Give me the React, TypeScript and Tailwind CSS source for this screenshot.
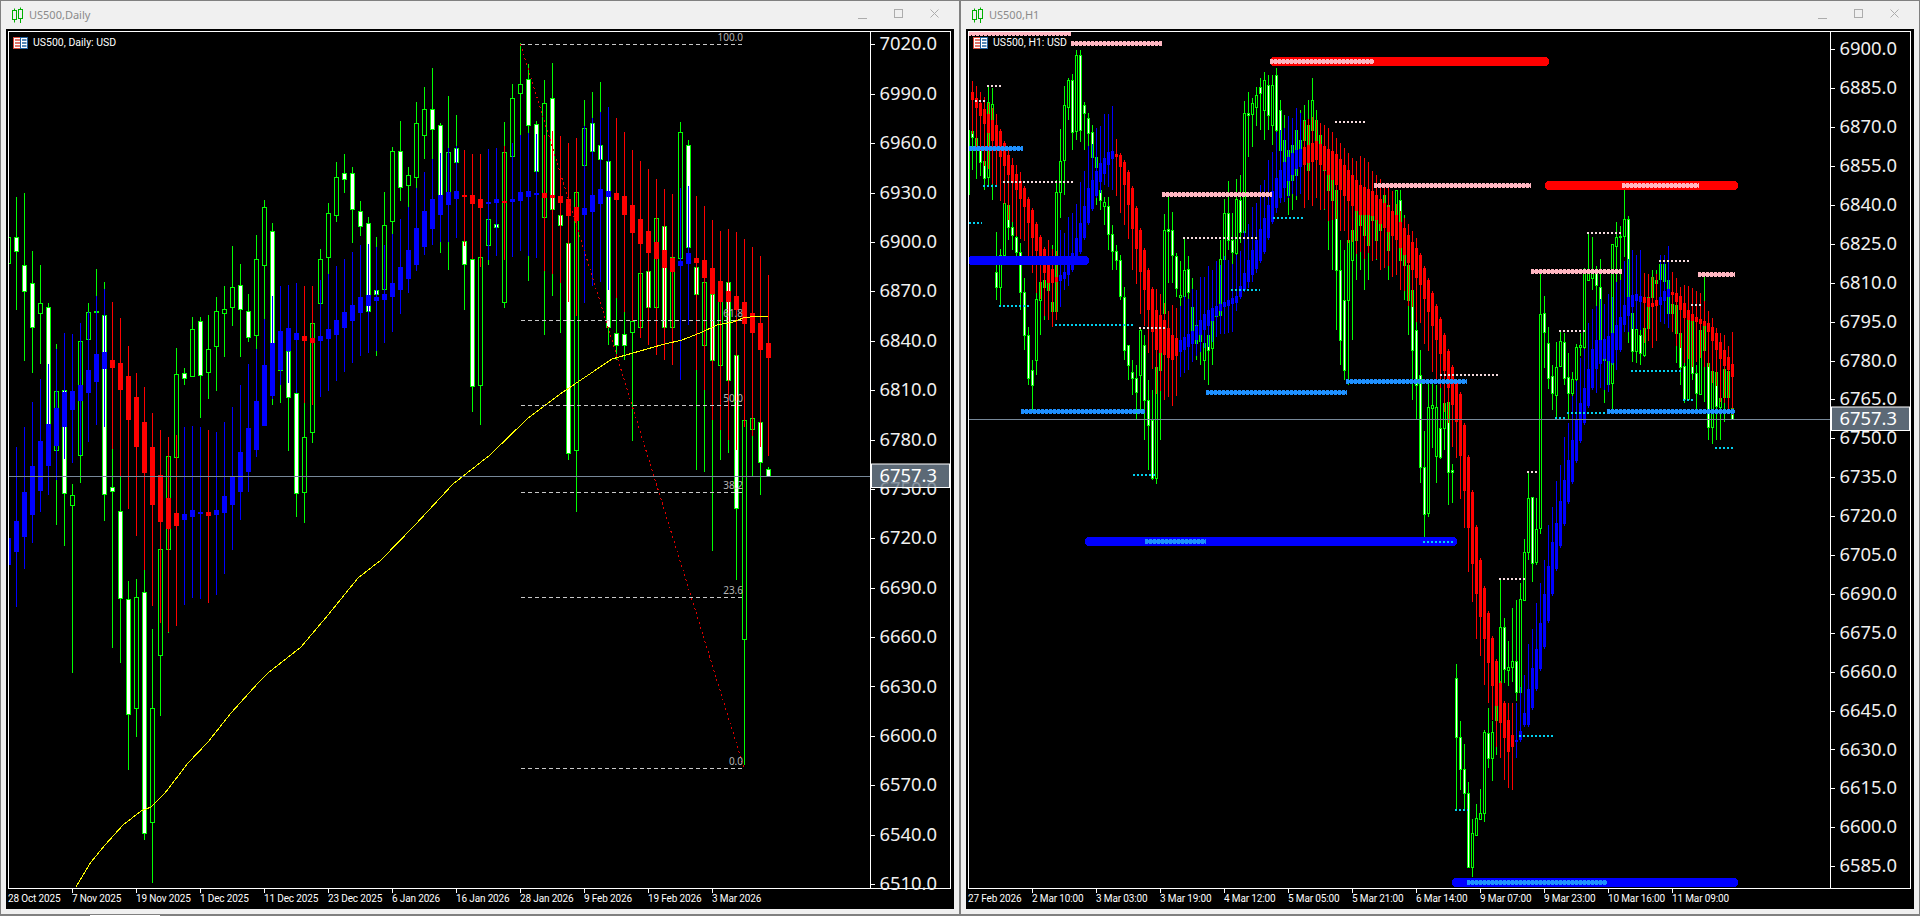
const GREEN = '#00ff00'

// [high, bodyTop, bodyBottom, low, filled], first bar sits at x=8, 8px apart
const dailyBars: number[][] = [
  [230,237,263,280,0],[197,237,251,310,1],[193,265,291,361,1],[251,283,327,373,1],[265,303,313,364,0],[303,307,427,435,1],
  [344,391,450,525,0],[388,390,493,546,1],[484,495,505,673,0],[341,341,455,483,0],[303,312,339,442,0],[269,311,312,400,0],
  [282,315,494,521,1],[449,487,491,648,1],[477,511,598,663,1],[581,599,714,770,1],[579,597,708,737,0],[569,592,833,840,1],
  [629,708,822,883,0],[549,549,655,716,0],[456,456,549,633,0],[348,374,457,460,0],[368,373,378,385,1],[317,329,376,377,0],
  [317,321,375,418,1],[315,349,372,399,0],[297,311,346,391,0],[286,309,313,357,0],[246,287,307,326,0],[264,285,309,357,1],
  [294,311,337,342,1],[235,259,335,349,0],[200,207,265,320,0],[223,231,343,405,1],[340,350,370,403,0],[343,351,397,451,1],
  [393,393,493,517,1],[403,437,492,523,0],[323,323,432,443,0],[249,259,303,310,0],[203,213,257,274,0],[162,177,215,222,0],
  [154,173,179,193,1],[167,173,209,243,1],[201,211,226,236,1],[217,223,311,312,1],[237,290,294,356,1],[192,225,289,295,0],
  [147,151,221,234,0],[121,151,187,201,1],[167,175,185,207,0],[102,123,177,189,0],[87,109,135,159,0],[68,109,129,159,1],
  [123,125,195,253,1],[96,152,192,270,0],[115,148,162,170,1],[241,241,264,310,1],[259,259,386,412,1],[257,257,385,425,0],
  [219,219,245,265,0],[224,224,227,228,1],[122,152,302,308,0],[84,98,156,158,0],[43,84,93,135,0],[64,79,125,281,1],
  [121,124,171,172,1],[80,103,217,335,0],[63,98,209,296,1],[215,215,225,333,1],[243,243,453,460,1],[192,192,450,512,0],
  [100,128,165,250,0],[92,123,151,200,1],[82,145,159,165,1],[161,161,327,345,1],[298,333,345,360,1],[312,334,345,360,1],
  [321,321,332,441,0],[273,273,327,338,0],[271,271,307,340,1],[218,218,307,320,0],[226,226,327,335,1],[257,257,327,340,0],
  [122,132,258,262,0],[140,145,247,255,1],[267,267,294,470,1],[282,282,345,472,0],[294,294,360,551,1],[300,300,365,460,0],
  [282,282,380,453,1],[340,355,508,580,1],[420,420,639,765,0],[418,418,429,476,0],[422,422,462,495,1],[467,469,476,476,1],
]

// smoothed overlay, same grid: [high, bodyTop, bodyBottom, low, 1 = blue / 0 = red]
const dailySmooth: number[][] = [
  [450,538,565,600,1],[447,521,552,607,1],[427,492,537,569,1],[402,466,515,543,1],[379,441,491,512,1],[364,424,466,495,1],
  [349,408,446,480,1],[333,392,427,459,1],[334,391,410,463,1],[323,385,401,455,1],[312,370,393,442,1],[296,354,382,425,1],
  [289,352,369,427,1],[302,360,368,449,0],[318,363,390,477,0],[346,376,420,509,0],[373,397,447,536,0],[387,422,473,570,0],
  [413,447,505,606,0],[430,475,522,623,0],[437,498,529,632,0],[435,513,526,626,0],[427,514,520,605,1],[426,510,517,598,1],
  [427,512,514,599,1],[430,512,516,603,0],[432,510,515,595,1],[422,496,513,574,1],[407,477,505,550,1],[385,452,492,520,1],
  [364,428,472,492,1],[349,401,450,457,1],[319,365,426,426,1],[296,343,396,399,1],[286,331,370,385,1],[285,328,351,383,1],
  [283,333,340,393,1],[286,336,341,403,0],[286,338,343,405,0],[280,336,341,397,1],[274,329,339,391,1],[266,320,335,381,1],
  [259,312,328,372,1],[252,305,321,363,1],[245,297,313,356,1],[244,295,306,353,1],[247,297,301,351,1],[245,294,300,343,1],
  [234,283,297,332,1],[219,267,290,314,1],[207,250,279,293,1],[188,228,265,271,1],[172,211,247,255,1],[159,199,229,245,1],
  [153,195,215,242,1],[148,192,205,242,1],[146,191,199,238,1],[150,195,196,246,0],[154,195,204,259,0],[154,199,208,267,0],
  [149,202,204,260,1],[148,199,203,256,1],[146,201,202,260,0],[143,199,202,257,1],[135,192,201,251,1],[133,191,197,256,1],
  [134,193,194,258,1],[135,193,198,271,0],[131,195,198,274,0],[136,196,203,283,0],[143,199,216,302,0],[138,207,221,316,0],
  [126,208,215,303,1],[118,195,212,286,1],[112,189,204,282,1],[107,191,197,290,1],[118,193,200,298,0],[132,196,215,312,0],
  [150,205,233,321,0],[161,219,244,338,0],[169,231,253,345,0],[179,242,259,355,0],[189,250,268,360,0],[194,258,272,365,0],
  [188,261,266,380,1],[186,253,264,325,1],[196,258,263,370,0],[206,260,278,390,0],[220,268,294,420,0],[231,281,302,430,0],
  [229,291,302,440,0],[232,296,310,450,0],[239,302,324,427,0],[247,313,333,436,0],[256,323,350,447,0],[275,343,358,456,0],
]

const dailyMa = '76,887 91,862 105,845 123,825 141,811 151,807 165,793 188,763 208,742 231,713 258,683 268,673 301,647 328,615 358,578 381,560 415,525 453,484 490,455 527,419 563,392 612,359 661,345 682,340 700,333 717,325 733,322 743,318 750,317 768,316'

// [x, bodyTop, bodyBottom, filled, high, low]
const hourBars: number[][] = [
  [972,131,137,1,121,170],[976,138,148,1,128,179],[980,150,162,1,143,176],[984,161,178,1,148,190],[988,102,177,0,86,186],[992,104,130,0,88,200],
  [996,272,287,1,232,300],[1000,255,287,0,249,306],[1004,203,255,0,198,262],[1008,205,227,1,196,240],[1012,227,235,1,210,250],[1016,237,252,1,217,263],
  [1020,252,292,1,243,310],[1024,292,335,1,278,350],[1028,335,378,1,327,385],[1032,370,385,1,360,413],[1036,299,360,0,285,375],[1040,282,300,0,265,335],
  [1044,280,287,0,265,320],[1048,282,290,1,260,318],[1052,302,311,0,245,320],[1056,192,311,0,180,320],[1060,161,192,0,129,218],[1064,105,160,0,86,195],
  [1068,80,107,0,78,120],[1072,80,132,1,74,150],[1076,55,131,0,50,140],[1080,55,130,1,50,142],[1084,105,113,1,102,150],[1088,118,133,1,113,150],
  [1092,132,157,1,125,190],[1096,157,167,0,145,205],[1100,190,200,1,190,210],[1104,202,206,0,197,225],[1108,206,234,1,197,250],[1112,234,251,1,225,270],
  [1116,251,260,1,245,270],[1120,260,296,1,255,300],[1124,297,350,1,287,360],[1128,345,365,1,347,380],[1132,372,378,1,360,395],[1136,378,392,1,365,420],
  [1140,330,375,0,328,410],[1144,345,400,1,335,440],[1148,400,425,1,380,470],[1152,420,478,1,390,480],[1156,367,478,0,350,484],[1160,345,370,0,335,440],
  [1164,230,313,0,214,365],[1168,229,231,1,197,283],[1172,230,255,1,212,283],[1176,256,288,1,253,297],[1180,295,297,0,261,327],[1184,270,296,0,238,317],
  [1188,269,292,1,256,305],[1192,307,343,1,278,355],[1196,325,343,1,310,360],[1200,324,341,0,310,365],[1204,343,360,0,320,380],[1208,335,350,1,320,385],
  [1212,318,348,0,300,365],[1216,312,316,0,285,325],[1220,259,315,0,240,325],[1224,213,259,0,199,262],[1228,213,240,1,181,250],[1232,240,252,1,213,265],
  [1236,199,253,0,179,255],[1240,200,232,1,175,243],[1244,113,232,0,101,235],[1248,113,115,1,92,157],[1252,103,114,0,98,147],[1256,95,107,0,87,126],
  [1260,87,93,1,78,130],[1264,80,110,0,72,140],[1268,85,115,1,75,130],[1272,85,125,0,75,145],[1276,75,130,1,68,150],[1280,110,150,1,100,175],
  [1284,140,170,0,115,195],[1288,150,195,1,130,215],[1292,145,180,0,130,210],[1296,130,175,1,120,200],[1300,140,160,0,110,175],[1304,120,140,0,105,160],
  [1308,125,170,1,100,185],[1312,100,130,0,78,150],[1316,120,150,1,110,170],[1320,135,160,1,125,190],[1324,150,170,1,130,210],[1328,160,190,1,140,250],
  [1332,165,200,0,140,270],[1336,190,270,1,170,330],[1340,270,340,1,240,365],[1344,300,370,1,250,380],[1348,240,300,0,190,385],[1352,230,260,0,200,340],
  [1356,205,240,0,190,280],[1360,200,225,1,190,270],[1364,205,235,1,195,290],[1368,215,245,0,200,280],[1372,195,220,0,185,240],[1376,200,240,1,195,260],
  [1380,200,230,0,190,260],[1384,195,215,0,190,250],[1388,205,250,1,195,280],[1392,215,235,0,195,270],[1396,190,230,0,190,250],[1400,200,260,1,190,270],
  [1404,235,265,1,215,300],[1408,265,300,1,250,335],[1412,290,350,1,280,400],[1416,330,385,1,300,420],[1420,375,467,1,350,483],[1424,467,514,1,431,537],
  [1428,407,513,0,382,517],[1432,405,408,0,380,448],[1436,407,456,0,385,483],[1440,428,457,1,382,459],[1444,403,428,0,383,450],[1448,402,472,1,385,505],
  [1452,470,472,1,464,503],[1456,678,737,1,664,810],[1460,737,769,1,721,790],[1464,769,793,1,744,810],[1468,793,867,1,782,868],[1472,833,867,0,819,877],
  [1476,818,835,0,804,836],[1480,813,819,0,789,820],[1484,732,813,0,730,822],[1488,733,758,1,708,768],[1492,732,758,0,721,781],[1496,705,720,0,706,755],
  [1500,627,683,0,579,723],[1504,627,669,1,618,683],[1508,667,670,0,641,686],[1512,661,667,0,608,682],[1516,661,692,1,600,701],[1520,599,692,0,583,692],
  [1524,552,600,0,539,600],[1528,498,552,0,472,560],[1532,497,563,1,497,582],[1536,529,562,0,498,565],[1540,314,528,0,273,534],[1544,313,332,1,296,368],
  [1548,343,378,1,327,389],[1552,376,393,1,365,410],[1556,367,395,0,342,418],[1560,341,366,0,332,367],[1564,342,378,1,333,385],[1568,377,393,1,353,420],
  [1572,379,393,0,372,399],[1576,347,379,0,344,425],[1580,345,347,0,333,356],[1584,273,347,0,268,357],[1588,273,280,0,233,281],[1592,273,278,0,237,290],
  [1596,270,285,1,266,340],[1600,287,347,1,259,375],[1604,340,360,0,340,403],[1608,360,384,1,305,392],[1612,244,383,0,244,410],[1616,237,246,0,222,282],
  [1620,236,237,0,226,282],[1624,219,236,0,190,257],[1628,219,297,1,216,343],[1632,313,351,1,296,362],[1636,329,351,0,315,363],[1640,335,353,1,320,365],
  [1644,328,355,0,300,357],[1648,297,328,0,297,330],[1652,277,297,0,270,300],[1656,280,283,1,270,310],[1660,264,279,0,262,280],[1664,264,281,0,262,300],
  [1668,280,313,0,270,322],[1672,304,313,0,304,325],[1676,305,333,1,305,363],[1680,333,367,1,333,385],[1684,366,399,1,363,403],[1688,320,399,0,320,400],
  [1692,321,373,1,320,380],[1696,373,393,1,365,410],[1700,330,394,0,330,395],[1704,325,350,0,277,402],[1708,363,427,1,328,440],[1712,371,427,0,368,444],
  [1716,372,406,1,372,440],[1720,398,407,0,368,440],[1724,369,397,0,369,422],[1728,371,397,0,371,410],[1732,408,419,1,405,420],
]

// body outline of the smoothed overlay on the hourly chart: [x, top, bottom]
const hourSmoothKeys: number[][] = [
  [968,85,95],[972,92,100],[1000,131,157],[1008,155,175],[1016,174,190],[1024,188,207],[1032,210,238],[1040,237,263],[1048,260,283],[1056,277,282],
  [1064,272,279],[1072,253,270],[1080,223,252],[1088,188,223],[1100,163,182],[1108,152,165],[1112,151,159],[1116,154,157],[1120,155,167],[1124,162,185],
  [1128,172,205],[1132,188,229],[1136,208,249],[1140,230,272],[1144,250,290],[1148,270,310],[1152,289,332],[1156,310,350],[1164,320,355],[1172,335,360],
  [1180,340,352],[1184,337,350],[1193,330,343],[1207,310,327],[1223,302,307],[1237,295,303],[1249,257,280],[1257,237,267],[1265,215,250],[1275,180,210],
  [1285,160,185],[1295,150,170],[1303,148,165],[1316,141,160],[1335,153,184],[1359,184,215],[1371,190,215],[1396,215,240],[1420,255,285],[1439,315,350],
  [1456,383,422],[1460,394,456],[1464,425,491],[1468,457,528],[1472,492,564],[1476,527,594],[1480,560,617],[1484,588,639],[1488,613,663],[1492,638,686],
  [1496,661,706],[1500,683,723],[1504,703,738],[1508,720,752],[1512,735,747],[1516,740,742],[1520,731,740],[1524,713,725],[1528,689,725],[1532,668,708],
  [1536,649,689],[1540,623,669],[1544,594,647],[1548,566,621],[1552,542,594],[1556,523,569],[1560,501,546],[1564,480,524],[1568,460,502],[1572,440,482],
  [1576,419,461],[1580,403,441],[1584,388,423],[1588,369,406],[1592,349,388],[1596,340,369],[1604,339,359],[1612,333,363],[1616,325,350],[1620,317,350],
  [1624,305,325],[1628,297,316],[1632,295,307],[1636,294,301],[1644,297,303],[1648,298,307],[1652,303,307],[1660,297,305],[1664,291,301],[1668,289,297],
  [1672,292,295],[1676,293,302],[1680,296,310],[1684,303,318],[1688,310,320],[1692,314,321],[1696,317,322],[1704,321,326],[1708,323,332],[1712,327,341],
  [1716,333,350],[1720,342,359],[1724,350,366],[1728,357,370],[1732,364,377],
]

const blueSpans = [[1060, 1113], [1180, 1303], [1516, 1640], [1660, 1668]]

function smoothAt(x: number): [number, number] {
  for (let i = 1; i < hourSmoothKeys.length; i++) {
    const a = hourSmoothKeys[i - 1]
    const b = hourSmoothKeys[i]
    if (x <= b[0]) {
      const t = (x - a[0]) / (b[0] - a[0])
      return [a[1] + (b[1] - a[1]) * t, a[2] + (b[2] - a[2]) * t]
    }
  }
  const last = hourSmoothKeys[hourSmoothKeys.length - 1]
  return [last[1], last[2]]
}

const hourSmooth = Array.from({ length: 191 }, (_, j) => {
  const x = 972 + j * 4
  const [top, bot] = smoothAt(x)
  const next = smoothAt(x + 4)
  const slope = Math.abs(next[0] + next[1] - top - bot) / 2
  const blue = blueSpans.some(([a, b]) => x >= a && x <= b)
  const short = Math.max(2, 32 - slope * 3)
  const long = 34 + ((j * 7) % 13)
  return {
    x,
    top: Math.round(top),
    bot: Math.round(bot),
    hi: Math.round(top - (blue ? long : short)),
    lo: Math.round(bot + (blue ? short : long)),
    blue,
  }
})

// [x1, x2, y]
const thickRed = [[1270, 1549, 61], [1545, 1738, 185]]
const thickBlue = [[968, 1089, 260], [1085, 1457, 541], [1452, 1738, 882]]
const beadPink = [[968, 1071, 33], [1071, 1162, 43], [1162, 1272, 194], [1270, 1374, 61], [1374, 1531, 185], [1531, 1622, 271], [1622, 1699, 185], [1698, 1735, 274]]
const beadBlue = [[969, 1023, 148], [1021, 1145, 411], [1145, 1206, 541], [1206, 1347, 392], [1346, 1467, 381], [1467, 1607, 882], [1607, 1735, 411]]
const dotWhite = [[987, 1002, 86], [975, 986, 101], [1003, 1074, 182], [1183, 1258, 238], [1139, 1166, 328], [1335, 1367, 122], [1440, 1498, 375], [1499, 1525, 579], [1527, 1538, 472], [1559, 1586, 331], [1587, 1622, 233], [1659, 1690, 261], [1691, 1702, 305]]
const dotCyan = [[969, 982, 223], [983, 998, 186], [999, 1030, 306], [1055, 1134, 325], [1133, 1157, 475], [1231, 1260, 290], [1273, 1304, 218], [1423, 1454, 542], [1455, 1468, 810], [1519, 1554, 736], [1555, 1566, 418], [1567, 1607, 413], [1631, 1682, 371], [1683, 1694, 400], [1715, 1734, 448]]

const fibLevels = [
  { y: 44, label: '100.0' },
  { y: 320, label: '61.8' },
  { y: 405, label: '50.0' },
  { y: 492, label: '38.2' },
  { y: 597, label: '23.6' },
  { y: 768, label: '0.0' },
]

const dailyPrices = Array.from({ length: 18 }, (_, i) => ({ label: (7020 - i * 30).toFixed(1), y: 44.3 + i * 49.4 }))
const hourPrices = Array.from({ length: 22 }, (_, i) => ({ label: (6900 - i * 15).toFixed(1), y: 49.3 + i * 38.9 }))

const dailyTimes = ['28 Oct 2025', '7 Nov 2025', '19 Nov 2025', '1 Dec 2025', '11 Dec 2025', '23 Dec 2025', '6 Jan 2026', '16 Jan 2026', '28 Jan 2026', '9 Feb 2026', '19 Feb 2026', '3 Mar 2026']
const hourTimes = ['27 Feb 2026', '2 Mar 10:00', '3 Mar 03:00', '3 Mar 19:00', '4 Mar 12:00', '5 Mar 05:00', '5 Mar 21:00', '6 Mar 14:00', '9 Mar 07:00', '9 Mar 23:00', '10 Mar 16:00', '11 Mar 09:00']

function Candle({ x, hi, top, bot, lo, filled, half }: { x: number; hi: number; top: number; bot: number; lo: number; filled: boolean; half: number }) {
  const h = Math.max(bot - top, 1) + 1
  return (
    <g>
      <rect x={x} y={hi} width={1} height={Math.max(lo - hi, 1)} fill={GREEN} />
      <rect x={x - half} y={top} width={half * 2 + 1} height={h} fill={GREEN} />
      {h > 2 && <rect x={x - half + 1} y={top + 1} width={half * 2 - 1} height={h - 2} fill={filled ? '#ffffff' : '#000000'} />}
    </g>
  )
}

function Smooth({ x, hi, top, bot, lo, blue, half }: { x: number; hi: number; top: number; bot: number; lo: number; blue: boolean; half: number }) {
  const color = blue ? '#0000ff' : '#ff0000'
  return (
    <g>
      <rect x={x} y={hi} width={1} height={lo - hi} fill={color} />
      <rect x={x - half} y={top} width={half * 2 + 1} height={Math.max(bot - top, 2)} fill={color} />
    </g>
  )
}

function CandleIcon() {
  return (
    <svg width="12" height="16" viewBox="0 0 12 16" className="shrink-0">
      <path d="M2.5 0.5v14M8.5 -0.5v16" stroke="#00b000" strokeWidth="1" fill="none" transform="translate(0 1)" />
      <rect x="0.5" y="3.5" width="4" height="9" fill="#f0f0f0" stroke="#00b000" />
      <rect x="6.5" y="2.5" width="4" height="9" fill="#f0f0f0" stroke="#00b000" />
    </svg>
  )
}

function WindowButtons() {
  return (
    <svg width="82" height="12" viewBox="0 0 82 12" className="shrink-0" fill="none" stroke="#acacac">
      <path d="M0 9.5h9" />
      <rect x="36.5" y="0.5" width="8" height="8" />
      <path d="M72.5 0.5l8 8M80.5 0.5l-8 8" />
    </svg>
  )
}

function FlagIcon() {
  return (
    <svg width="15" height="12" viewBox="0 0 15 12" className="shrink-0">
      <rect x="0.5" y="0.5" width="7" height="11" fill="#ffffff" stroke="#d9483b" />
      <rect x="7.5" y="0.5" width="7" height="11" fill="#ffffff" stroke="#1f5f9e" />
      <path d="M2 3h5M2 6h5M2 9h5" stroke="#d9483b" strokeWidth="1.4" />
      <path d="M9 3h4.500M9 6h4.500M9 9h4.500" stroke="#1f5f9e" strokeWidth="1.4" />
    </svg>
  )
}

function PriceAxis({ prices, current, currentY }: { prices: { label: string; y: number }[]; current: string; currentY: number }) {
  return (
    <svg width="79" height="856" viewBox="0 32 79 856" className="block shrink-0 overflow-visible">
      {prices.map((p) => (
        <g key={p.label}>
          <rect x="0" y={Math.round(p.y)} width="4" height="1" fill="#ffffff" />
          <text x="8.500" y={p.y + 6} fill="#f0f0f0" fontSize="18.4">{p.label}</text>
        </g>
      ))}
      <rect x="0.5" y={currentY - 12} width="78" height="23.500" fill="#708090" fillOpacity="0.82" stroke="#ffffff" />
      <text x="8.500" y={currentY + 6} fill="#ffffff" fontSize="18.4">{current}</text>
    </svg>
  )
}

function TimeAxis({ labels }: { labels: string[] }) {
  return (
    <div className="flex h-5 overflow-hidden font-['Roboto',sans-serif] text-[10px] leading-none tracking-[-0.15px] text-white">
      {labels.map((label, i) => (
        <div key={label} className="w-16 shrink-0">
          <div className={i === 0 ? 'h-1 w-px' : 'h-1 w-px bg-white'} />
          <div className="mt-px whitespace-nowrap">{label}</div>
        </div>
      ))}
    </div>
  )
}

function ChartWindow({ title, legend, times, axis, viewBox, children }: { title: string; legend: string; times: string[]; axis: React.ReactNode; viewBox: string; children: React.ReactNode }) {
  return (
    <div className="flex h-[914px] w-[960px] shrink-0 flex-col border-x border-t border-[#808080] bg-[#f0f0f0]">
      <div className="flex h-7 shrink-0 items-center justify-between pl-[11px] pr-[19px]">
        <div className="flex items-center gap-[5px] text-[11px] text-[#8a8a8a]">
          <CandleIcon />
          <span>{title}</span>
        </div>
        <WindowButtons />
      </div>
      <div className="ml-[5px] mr-[5px] h-[880px] bg-black pl-[2px] pr-[3px] pt-[2px]">
        <div className="flex h-[858px] border border-white">
          <div className="relative h-[856px] w-[861px] shrink-0 overflow-hidden">
            <svg width="861" height="856" viewBox={viewBox} shapeRendering="crispEdges" className="block">
              {children}
            </svg>
            <div className="absolute left-1 top-[5px] flex items-center gap-[5px] font-['Roboto',sans-serif] text-[10.500px] leading-none text-white">
              <FlagIcon />
              <span>{legend}</span>
            </div>
          </div>
          <div className="border-l border-white">{axis}</div>
        </div>
        <TimeAxis labels={times} />
      </div>
    </div>
  )
}

function DailyChart() {
  return (
    <>
      {dailyBars.map((b, i) => (
        <Candle key={i} x={8 + i * 8} hi={b[0]} top={b[1]} bot={b[2]} lo={b[3]} filled={b[4] === 1} half={2} />
      ))}
      {dailySmooth.map((b, i) => (
        <Smooth key={i} x={8 + i * 8} hi={b[0]} top={b[1]} bot={b[2]} lo={b[3]} blue={b[4] === 1} half={2} />
      ))}
      <polyline points={dailyMa} fill="none" stroke="#ffff00" strokeWidth="1" />
      <line x1="520.5" y1="44" x2="744" y2="768" stroke="#e00000" strokeWidth="1" strokeDasharray="2 3" />
      {fibLevels.map((f) => (
        <g key={f.label}>
          <line x1="521" y1={f.y + 0.5} x2="745" y2={f.y + 0.5} stroke="#c8c8c8" strokeDasharray="4 3" />
          <text x="743" y={f.y - 3} textAnchor="end" fill="#b4b4b4" fontSize="10" shapeRendering="auto">{f.label}</text>
        </g>
      ))}
      <rect x="9" y="476" width="861" height="1" fill="#778899" />
    </>
  )
}

function HourChart() {
  return (
    <>
      <rect x="969" y="130" width="1" height="65" fill={GREEN} />
      {hourBars.map((b) => (
        <Candle key={b[0]} x={b[0]} hi={b[4]} top={b[1]} bot={b[2]} lo={b[5]} filled={b[3] === 1} half={1} />
      ))}
      {hourSmooth.map((b) => (
        <Smooth key={b.x} x={b.x} hi={b.hi} top={b.top} bot={b.bot} lo={b.lo} blue={b.blue} half={1} />
      ))}
      <rect x="969" y="419" width="861" height="1" fill="#778899" />
      {thickRed.map(([a, b, y]) => (
        <rect key={a} x={a} y={y - 4} width={b - a} height="9" rx="4" fill="#ff0000" />
      ))}
      {thickBlue.map(([a, b, y]) => (
        <rect key={a} x={a} y={y - 4} width={b - a} height="9" rx="4" fill="#0000ff" />
      ))}
      {beadPink.map(([a, b, y]) => (
        <g key={a}>
          <rect x={a} y={y - 1} width={b - a} height="3" fill="#ffb6c1" />
          <line x1={a} y1={y + 0.5} x2={b} y2={y + 0.5} stroke="#ffb6c1" strokeWidth="5" strokeDasharray="3 1" />
        </g>
      ))}
      {beadBlue.map(([a, b, y]) => (
        <g key={a}>
          <rect x={a} y={y - 1} width={b - a} height="3" fill="#1e90ff" />
          <line x1={a} y1={y + 0.5} x2={b} y2={y + 0.5} stroke="#1e90ff" strokeWidth="5" strokeDasharray="3 1" />
        </g>
      ))}
      {dotWhite.map(([a, b, y]) => (
        <line key={a} x1={a} y1={y} x2={b} y2={y} stroke="#f4dadd" strokeWidth="2" strokeDasharray="2 2" />
      ))}
      {dotCyan.map(([a, b, y]) => (
        <line key={a} x1={a} y1={y} x2={b} y2={y} stroke="#00d0f0" strokeWidth="2" strokeDasharray="2 2" />
      ))}
    </>
  )
}

export default function App() {
  return (
    <div className="relative flex h-[916px] w-[1920px] overflow-hidden bg-[#808080] font-['Noto_Sans',sans-serif]">
      <ChartWindow
        title="US500,Daily"
        legend="US500, Daily:  USD"
        times={dailyTimes}
        viewBox="9 32 861 856"
        axis={<PriceAxis prices={dailyPrices} current="6757.3" currentY={476} />}
      >
        <DailyChart />
      </ChartWindow>
      <ChartWindow
        title="US500,H1"
        legend="US500, H1:  USD"
        times={hourTimes}
        viewBox="969 32 861 856"
        axis={<PriceAxis prices={hourPrices} current="6757.3" currentY={419} />}
      >
        <HourChart />
      </ChartWindow>
      <div className="absolute bottom-0 left-[90px] h-px w-[70px] bg-white" />
    </div>
  )
}
